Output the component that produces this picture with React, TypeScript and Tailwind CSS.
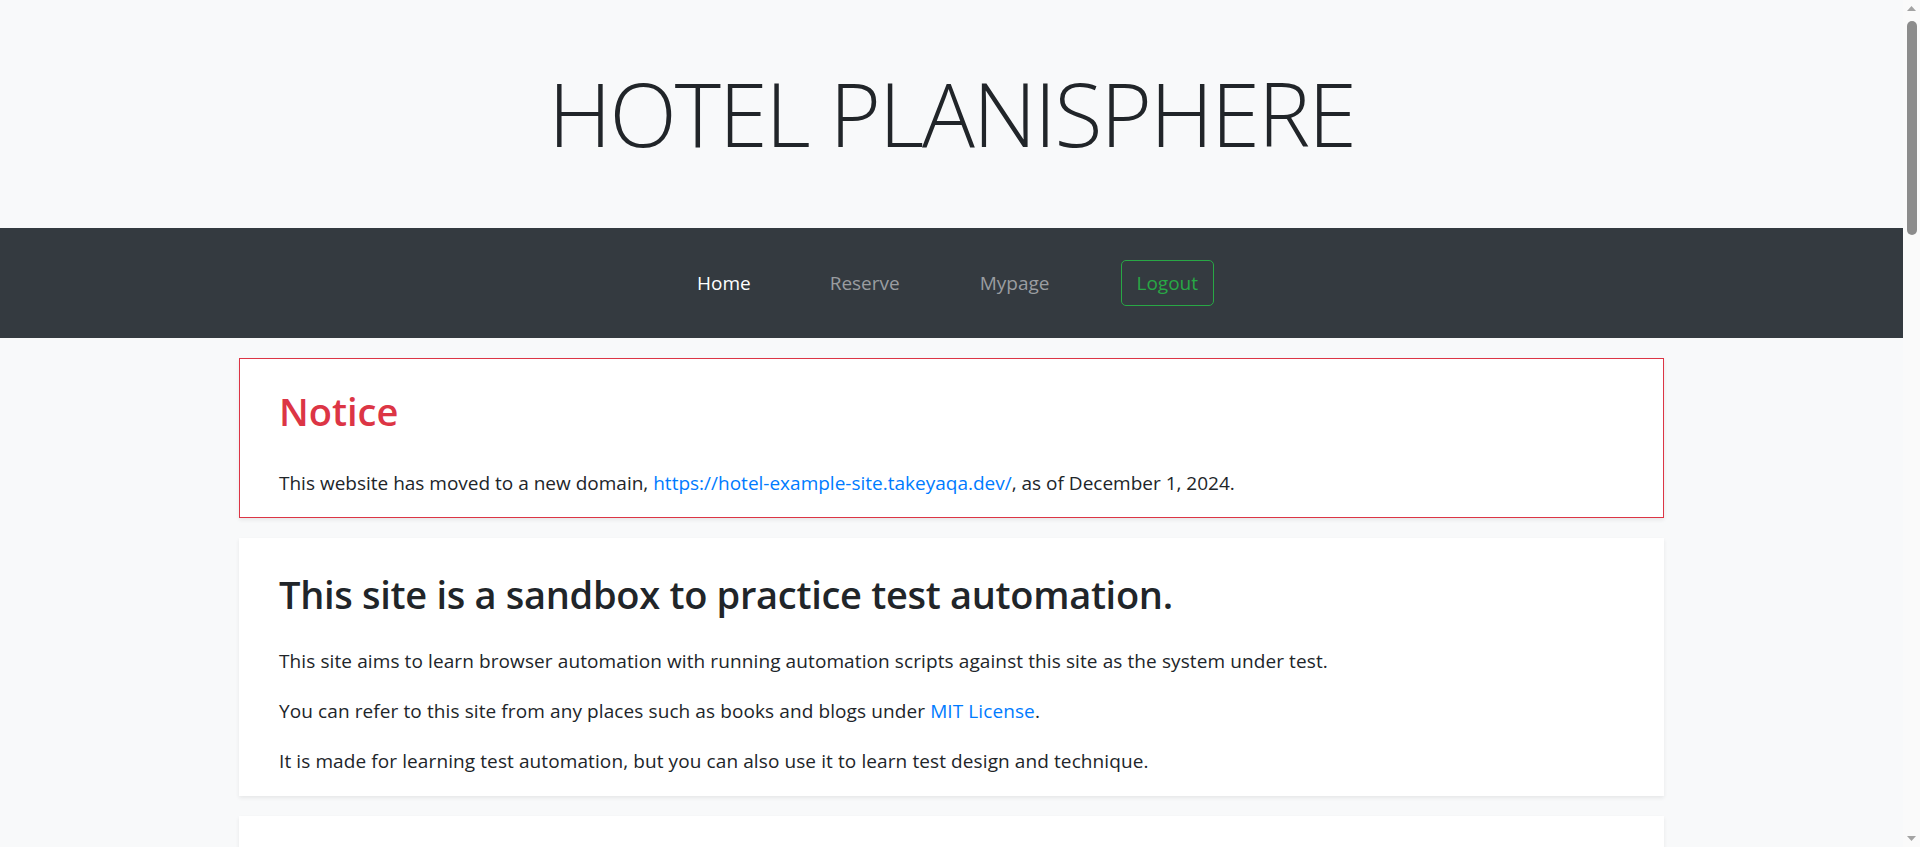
const NAV = [
  { label: 'Home', active: true, ml: '' },
  { label: 'Reserve', active: false, ml: 'ml-[79px]' },
  { label: 'Mypage', active: false, ml: 'ml-[80px]' },
]

const font = { fontFamily: '"Open Sans", "Noto Sans", sans-serif' }

function Scrollbar() {
  return (
    <aside className="w-[17px] shrink-0 h-full bg-[#fafafa] flex flex-col items-center">
      <div className="h-[17px] flex items-center justify-center">
        <svg width="9" height="5" viewBox="0 0 9 5">
          <path d="M0 5 L4.5 0 L9 5Z" fill="#a3a3a3" />
        </svg>
      </div>
      <div className="mt-[4px] w-[10px] h-[214px] rounded-full bg-[#8c8c8c]" />
      <div className="flex-1" />
      <div className="h-[17px] flex items-center justify-center">
        <svg width="9" height="5" viewBox="0 0 9 5">
          <path d="M0 0 L9 0 L4.5 5Z" fill="#a3a3a3" />
        </svg>
      </div>
    </aside>
  )
}

export default function App() {
  return (
    <div className="h-screen flex overflow-hidden bg-[#f8f9fa] text-[#212529]" style={font}>
      <div className="flex-1 min-w-0 h-full overflow-hidden">
        <header className="h-[228px] flex items-center justify-center">
          <h1 className="text-[88px] font-light leading-[1.2] tracking-[-2px]">HOTEL PLANISPHERE</h1>
        </header>

        <nav className="h-[110px] bg-[#343a40] flex items-center justify-center pl-[8px]">
          {NAV.map((n) => (
            <a
              key={n.label}
              href="#"
              className={`${n.ml} text-[19px] leading-[30px] ${n.active ? 'text-white' : 'text-[#9a9da0]'}`}
            >
              {n.label}
            </a>
          ))}
          <button className="ml-[71px] h-[46px] px-[15px] rounded-[5px] border border-[#28a745] text-[#28a745] text-[19px] leading-[30px]">
            Logout
          </button>
        </nav>

        <main className="w-[1425px] mx-auto pt-[20px] pb-10 flex flex-col gap-[20px]">
          <section className="bg-white border border-[#dc3545] shadow-[0_2px_4px_rgba(0,0,0,0.075)] px-[39px] pt-[28px] pb-[20px]">
            <h2 className="text-[38px] font-semibold leading-[48px] text-[#dc3545]">Notice</h2>
            <p className="mt-[35px] text-[19px] leading-[27px]">
              This website has moved to a new domain,{' '}
              <a href="#" className="text-[#007bff]">https://hotel-example-site.takeyaqa.dev/</a>, as of December 1, 2024.
            </p>
          </section>

          <section className="bg-white shadow-[0_2px_4px_rgba(0,0,0,0.075)] px-[40px] pt-[32px] pb-[21px]">
            <h2 className="text-[38px] font-semibold leading-[48px] tracking-[-0.3px]">This site is a sandbox to practice test automation.</h2>
            <div className="mt-[30px] flex flex-col gap-[23px] text-[19px] leading-[27px] tracking-[0.1px]">
              <p>This site aims to learn browser automation with running automation scripts against this site as the system under test.</p>
              <p>
                You can refer to this site from any places such as books and blogs under{' '}
                <a href="#" className="text-[#007bff]">MIT License</a>.
              </p>
              <p>It is made for learning test automation, but you can also use it to learn test design and technique.</p>
            </div>
          </section>

          <section className="bg-white shadow-[0_2px_4px_rgba(0,0,0,0.075)] px-[40px] pt-[32px] pb-[21px]">
            <h2 className="text-[38px] font-semibold leading-[48px] tracking-[-0.3px]">Notes</h2>
            <div className="mt-[30px] flex flex-col gap-[23px] text-[19px] leading-[27px] tracking-[0.1px]">
              <p>This site does not actually send and receive any data. All data is stored in the browser.</p>
              <p>Please be careful not to enter any personal information.</p>
            </div>
          </section>
        </main>
      </div>
      <Scrollbar />
    </div>
  )
}
